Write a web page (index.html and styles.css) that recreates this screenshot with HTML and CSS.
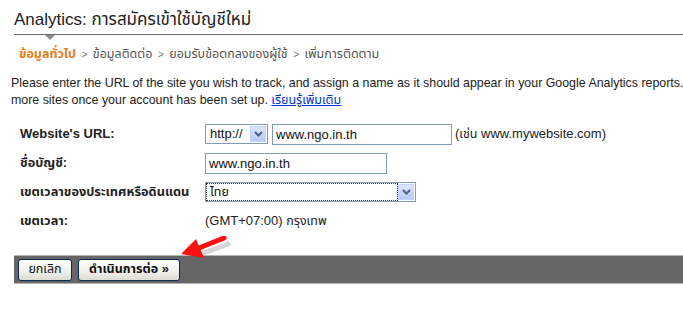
FILE: index.html
```html
<!DOCTYPE html>
<html lang="th">
<head>
<meta charset="utf-8">
<title>Analytics</title>
<link rel="stylesheet" href="styles.css">
</head>
<body>
<div class="page">
  <h1 class="title">Analytics: <span class="th">การสมัครเข้าใช้บัญชีใหม่</span></h1>
  <div class="rule"><span class="notch"></span></div>
  <div class="crumbs">
    <span class="current">ข้อมูลทั่วไป</span>
    <span class="sep">&gt;</span> ข้อมูลติดต่อ
    <span class="sep">&gt;</span> ยอมรับข้อตกลงของผู้ใช้
    <span class="sep">&gt;</span> เพิ่มการติดตาม
  </div>
  <p class="intro">Please enter the URL of the site you wish to track, and assign a name as it should appear in your Google Analytics reports. You can add more sites once your account has been set up. <a href="#" class="th">เรียนรู้เพิ่มเติม</a></p>

  <div class="form">
    <div class="row">
      <label class="lbl">Website's URL:</label>
      <div class="ctl">
        <div class="sel sel-proto"><span class="sel-text">http://</span><span class="sel-btn"><svg width="9" height="6" viewBox="0 0 9 6"><path d="M1 1 L4.5 4.5 L8 1" fill="none" stroke="#4d6185" stroke-width="2"/></svg></span></div>
        <input class="inp inp-url" type="text" value="www.ngo.in.th">
        <span class="hint">(<span class="th">เช่น</span> www.mywebsite.com)</span>
      </div>
    </div>
    <div class="row">
      <label class="lbl th">ชื่อบัญชี:</label>
      <div class="ctl"><input class="inp inp-name" type="text" value="www.ngo.in.th"></div>
    </div>
    <div class="row">
      <label class="lbl th">เขตเวลาของประเทศหรือดินแดน</label>
      <div class="ctl">
        <div class="sel sel-tz"><span class="sel-text focus th">ไทย</span><span class="sel-btn"><svg width="9" height="6" viewBox="0 0 9 6"><path d="M1 1 L4.5 4.5 L8 1" fill="none" stroke="#4d6185" stroke-width="2"/></svg></span></div>
      </div>
    </div>
    <div class="row">
      <label class="lbl th">เขตเวลา:</label>
      <div class="ctl"><span class="val">(GMT+07:00) <span class="th">กรุงเทพ</span></span></div>
    </div>
  </div>

  <div class="bar">
    <button class="btn btn-cancel th" type="button">ยกเลิก</button>
    <button class="btn btn-next" type="button"><span class="th">ดำเนินการต่อ</span> »</button>
  </div>

  <svg class="pointer" width="60" height="30" viewBox="0 0 60 30">
    <path d="M47 5 L20 15" stroke="#bbbbbb" stroke-width="5" stroke-linecap="round" opacity="0.6" transform="translate(2,3)"/>
    <path d="M45 2 L20 12" stroke="#ff1010" stroke-width="5" stroke-linecap="round"/>
    <polygon points="2,18 17,3 25,22" fill="#ff1010"/>
  </svg>
</div>
</body>
</html>
```

FILE: styles.css
```css
html, body {
  margin: 0;
  padding: 0;
  background: #fff;
  overflow: hidden;
}
body {
  font-family: "Liberation Sans", Arial, "Noto Sans Thai", "Umpush", "Loma", sans-serif;
  font-size: 13px;
  color: #222;
}
.th {
  font-size: 12.5px;
}
.page {
  position: relative;
  width: 790px;
  height: 310px;
}
.title {
  margin: 0 0 0 14px;
  padding-top: 9px;
  font-size: 17px;
  font-weight: normal;
  line-height: 22px;
  color: #222;
  height: 25px;
  white-space: nowrap;
}
.title .th {
  font-size: 17px;
}
.rule {
  position: relative;
  margin-left: 14px;
  border-top: 1px solid #6b6b6b;
  height: 0;
}
.notch {
  position: absolute;
  left: 31px;
  top: 0;
  width: 0;
  height: 0;
  border-left: 5px solid transparent;
  border-right: 5px solid transparent;
  border-top: 5px solid #8a8a8a;
}
.crumbs {
  margin: 10px 0 0 19px;
  line-height: 18px;
  color: #555;
  font-size: 12.5px;
  white-space: nowrap;
}
.crumbs .current {
  color: #e27d15;
  font-weight: bold;
}
.crumbs .sep {
  font-size: 10px;
  color: #777;
  margin: 0 2px;
}
.intro {
  margin: 11px 0 0 11px;
  width: 765px;
  line-height: 17px;
  font-size: 12.4px;
  color: #222;
}
.intro a {
  color: #0033cc;
  text-decoration: underline;
}
.form {
  margin: 14px 0 0 20px;
  display: flex;
  flex-direction: column;
  gap: 7px;
}
.row {
  display: grid;
  grid-template-columns: 185px 1fr;
  align-items: center;
  height: 22px;
  line-height: 16px;
}
.lbl {
  font-weight: bold;
  color: #222;
  white-space: nowrap;
}
.lbl.th {
  font-size: 12.75px;
}
.ctl {
  display: flex;
  align-items: center;
  white-space: nowrap;
}
.sel {
  display: flex;
  align-items: stretch;
  height: 20px;
  box-sizing: border-box;
  border: 1px solid #7f9db9;
  background: #fff;
}
.sel-text {
  flex: 1;
  padding: 0 4px;
  line-height: 18px;
  font-size: 13px;
  color: #111;
}
.sel-text.focus {
  margin: 1px 0 1px 1px;
  padding: 0 3px;
  line-height: 16px;
  outline: 1px dotted #333;
  font-size: 12.5px;
}
.sel-btn {
  width: 16px;
  margin: 1px;
  display: flex;
  align-items: center;
  justify-content: center;
  background: linear-gradient(#dbe6fb, #b7cbf4);
  border: 1px solid #c3d3fd;
  box-sizing: border-box;
}
.sel-proto {
  width: 63px;
}
.sel-tz {
  width: 211px;
}
.inp {
  height: 21px;
  box-sizing: border-box;
  border: 1px solid #7f9db9;
  padding: 0 3px;
  font-family: "Liberation Sans", Arial, sans-serif;
  font-size: 13px;
  color: #111;
  background: #fff;
  margin: 0;
}
.inp-url {
  width: 180px;
  margin-left: 4px;
}
.inp-name {
  width: 182px;
}
.hint {
  margin-left: 3px;
  color: #222;
}
.val {
  color: #222;
}
.bar {
  margin: 23px 0 0 14px;
  height: 29px;
  box-sizing: border-box;
  background: #666;
  border-top: 1px solid #b5b5b5;
  border-bottom: 1px solid #b5b5b5;
  display: flex;
  align-items: center;
  gap: 6px;
  padding-left: 4px;
}
.btn {
  height: 22px;
  box-sizing: border-box;
  border: 1px solid #0a2a5a;
  border-radius: 3px;
  background: linear-gradient(#ffffff, #f0f0ea 60%, #dcdcd2);
  font-family: "Liberation Sans", Arial, "Noto Sans Thai", "Umpush", "Loma", sans-serif;
  font-size: 13px;
  color: #111;
  padding: 0 6px;
  margin: 0;
  white-space: nowrap;
}
.btn-cancel {
  width: 54px;
  font-size: 12.5px;
}
.btn-next {
  width: 102px;
  font-weight: bold;
}
.pointer {
  position: absolute;
  left: 179px;
  top: 236px;
}
```
